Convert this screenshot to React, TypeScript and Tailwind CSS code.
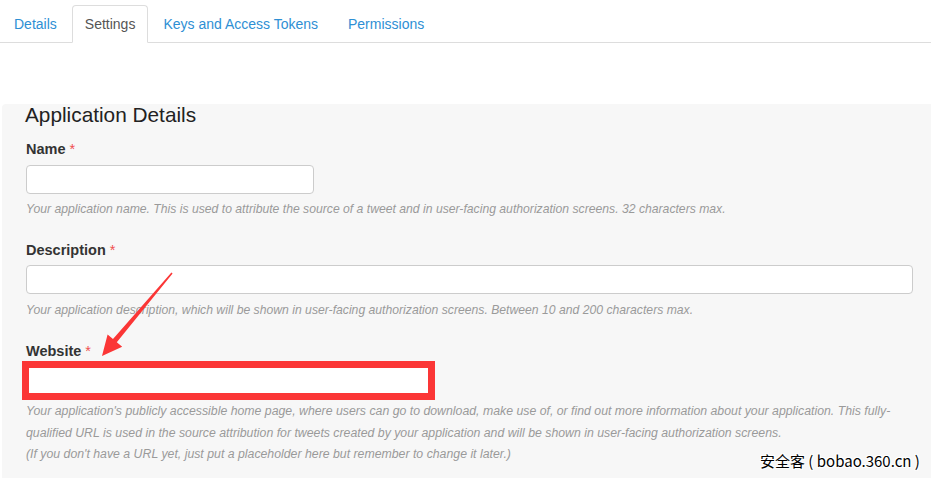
import React from "react";

const Req = () => <span className="text-[#f05050] font-normal ml-[4px]">*</span>;

export default function App() {
  return (
    <div
      className="relative w-[931px] h-[478px] overflow-hidden bg-white text-[#333]"
      style={{ fontFamily: '"Liberation Sans", Arial, sans-serif' }}
    >
      {/* Tabs */}
      <div className="pt-[5px] pl-[1px] border-b border-[#dddddd] flex text-[14px] leading-[20px]">
        <div className="px-[12px] py-[8px] mr-[2px] text-[#2e8fd4] border border-transparent -mb-px">Details</div>
        <div className="px-[12px] py-[8px] mr-[2px] text-[#555] bg-white border border-[#dddddd] border-b-white rounded-t-[4px] -mb-px">
          Settings
        </div>
        <div className="px-[12px] py-[8px] mr-[4px] text-[#2e8fd4] border border-transparent -mb-px">Keys and Access Tokens</div>
        <div className="px-[12px] py-[8px] text-[#2e8fd4] border border-transparent -mb-px">Permissions</div>
      </div>

      {/* Panel */}
      <div className="mt-[61px] ml-[2px] bg-[#f7f7f7] rounded-tl-[4px] pl-[24px] pr-[18px] pb-[30px]">
        <h2 className="text-[20.8px] leading-[22px] -ml-px text-[#222]">Application Details</h2>

        <div className="mt-[13px] text-[14.5px] leading-[20px] font-bold text-[#333]">
          Name
          <Req />
        </div>
        <div className="mt-[6px] w-[288px] h-[29px] bg-white border border-[#cccccc] rounded-[4px]" />
        <div className="mt-[6px] text-[12.2px] leading-[18px] italic text-[#9a9a9a]">
          Your application name. This is used to attribute the source of a tweet and in user-facing authorization screens. 32 characters max.
        </div>

        <div className="mt-[22px] text-[14.5px] leading-[20px] font-bold text-[#333]">
          Description
          <Req />
        </div>
        <div className="mt-[5px] h-[29px] bg-white border border-[#cccccc] rounded-[4px]" />
        <div className="mt-[7px] text-[12.2px] leading-[18px] italic text-[#9a9a9a]">
          Your application description, which will be shown in user-facing authorization screens. Between 10 and 200 characters max.
        </div>

        <div className="mt-[22px] text-[14.5px] leading-[20px] font-bold text-[#333]">
          Website
          <Req />
        </div>
        <div className="relative mt-[5px] w-[405px] h-[29px] bg-white border border-[#cccccc] rounded-[4px]">
          {/* annotation box */}
          <div className="absolute left-[-5px] top-[-6px] w-[413px] h-[39px] border-[7px] border-[#fb3636]" />
        </div>
        <div className="mt-[6px] text-[12.3px] leading-[21.5px] italic text-[#9a9a9a] whitespace-nowrap">
          <div>
            Your application's publicly accessible home page, where users can go to download, make use of, or find out more information about your application. This fully-
          </div>
          <div>qualified URL is used in the source attribution for tweets created by your application and will be shown in user-facing authorization screens.</div>
          <div>(If you don't have a URL yet, just put a placeholder here but remember to change it later.)</div>
        </div>
      </div>

      {/* Arrow annotation */}
      <svg className="absolute left-0 top-0 pointer-events-none" width="931" height="478" viewBox="0 0 931 478">
        <polygon
          points="171.4,272.6 172.6,273.4 116.8,342.3 122.2,346.8 102,356 107.6,334.4 113,339.1"
          fill="#fb3636"
        />
      </svg>

      {/* Watermark */}
      <div
        className="absolute left-[760px] top-[451px] text-[15px] leading-[20px] text-black whitespace-nowrap"
        style={{
          fontFamily: '"Noto Sans CJK SC", "Liberation Sans", sans-serif',
          textShadow: "1px 1px 0 #fff, -1px -1px 0 #fff, 1px -1px 0 #fff, -1px 1px 0 #fff",
        }}
      >
        安全客 ( bobao.360.cn )
      </div>
    </div>
  );
}
